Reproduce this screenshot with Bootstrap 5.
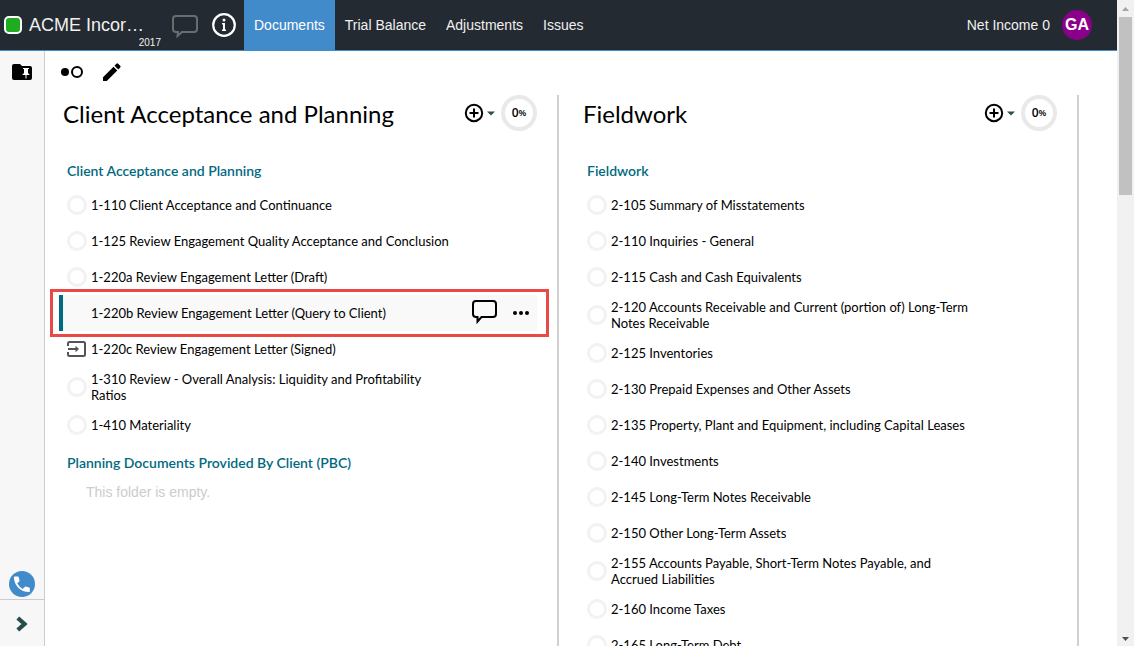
<!DOCTYPE html>
<html lang="en">
<head>
<meta charset="utf-8">
<meta name="viewport" content="width=device-width, initial-scale=1">
<title>ACME Incorporated - Documents</title>
<link href="https://cdn.jsdelivr.net/npm/bootstrap@5.3.0/dist/css/bootstrap.min.css" rel="stylesheet">
<style>
  body { font-family: "Liberation Sans", Arial, sans-serif; font-size: 14px; line-height: 20px; color: #000; background: #fff; }
  a { color: inherit; text-decoration: none; }
  button { border: 0; padding: 0; background: none; color: inherit; }
  svg { display: block; }
  .app-pane, .workspace { min-width: 0; min-height: 0; }
  .topbar { height: 51px; background: #242a31; border-bottom: 1px solid #428bca; color: #f0f0f0; }
  .status-chip { width: 18px; height: 18px; border: 2px solid #fff; border-radius: 5px; background: #20ac20; margin: 0 7px 0 4px; }
  .engagement { width: 133px; margin-right: 10px; }
  .engagement-name { font-size: 18px; line-height: 20px; }
  .engagement-year { right: 1px; top: 20px; font-size: 10px; line-height: 16px; }
  .info-button { margin: 0 8px 0 14px; }
  .tab-link { padding: 0 10px; color: #f0f0f0; }
  .tab-link.active { background: #428bca; color: #fff; }
  .avatar { width: 30px; height: 30px; background: #8b008b; color: #fff; font-size: 16px; font-weight: 700; margin: 0 25px 0 12px; }
  .sidebar { width: 45px; background: #f7f7f7; border-right: 1px solid #ccc; }
  .side-foot { height: 47px; border-top: 1px solid #ccc; padding-top: 2px; }
  .toolbar { height: 44px; padding: 0 0 2px 15px; gap: 18px; }
  .board { gap: 20px; padding: 0 38px 0 14px; }
  .phase { flex: 1 1 0; min-width: 0; padding-right: 20px; border-right: 2px solid #d0d0d0; font-family: Lato, sans-serif; }
  .phase-head { height: 36px; padding-left: 4px; margin-bottom: 24px; }
  .phase-title { font-size: 24px; line-height: 36px; font-weight: 400; padding-top: 2px; }
  .ring { width: 36px; height: 36px; border: 4px solid #e9e9e9; margin-left: 6px; font: 600 12px/16px "Open Sans", sans-serif; }
  .ring span { font-size: 9px; }
  .folder-title { margin: 0; padding-left: 8px; font-size: 14px; line-height: 32px; font-weight: 600; color: #006a80; }
  .doc { min-height: 36px; padding: 4px 86px 4px 8px; gap: 4px; font-size: 13px; line-height: 16px; }
  .doc-state { width: 20px; height: 20px; flex: none; }
  .state-open { border: 3px solid #f2f2f2; }
  .doc.current { background: #f9f9f9; box-shadow: inset 4px 0 #006a80; }
  .doc-actions { right: 7px; top: 0; bottom: 0; gap: 15px; }
  .callout-frame { inset: -6px -12px -6px -9px; border: 3px solid #ea4a46; }
  .empty-note { padding-left: 27px; margin: 0; line-height: 26px; color: #ccc; font-family: "Liberation Sans", Arial, sans-serif; }
  .scroll-track { width: 17px; background: #f1f1f1; padding: 7px 2px 5px; }
  .scroll-thumb { height: 28%; background: #c1c1c1; margin-top: 6px; }
</style>
</head>
<body class="vh-100 overflow-hidden d-flex">
<div class="app-pane d-flex flex-column flex-grow-1 h-100">
  <header class="topbar d-flex align-items-center flex-shrink-0">
    <span class="status-chip flex-shrink-0"></span>
    <div class="engagement position-relative flex-shrink-0">
      <a href="#" class="engagement-name d-block">ACME Incor…</a>
      <span class="engagement-year position-absolute">2017</span>
    </div>
    <button type="button" class="flex-shrink-0" aria-label="Comments">
      <svg width="26" height="26" viewBox="0 0 26 26" fill="none" stroke="#6a6d70" stroke-width="2"><path d="M4 4h18q3 0 3 3v10q0 3-3 3H10l-4.500 4L6 20H4q-3 0-3-3V7q0-3 3-3z"/></svg>
    </button>
    <button type="button" class="info-button flex-shrink-0" aria-label="Information">
      <svg width="24" height="24" viewBox="0 0 24 24"><circle cx="12" cy="12" r="10.800" fill="none" stroke="#fff" stroke-width="2.200"/><circle cx="12" cy="7" r="1.500" fill="#fff"/><path d="M10 10h3v6.500h1V18h-4v-1.500h1v-5h-1z" fill="#fff"/></svg>
    </button>
    <nav class="d-flex h-100">
      <a class="tab-link active d-flex align-items-center" href="#">Documents</a>
      <a class="tab-link d-flex align-items-center" href="#">Trial Balance</a>
      <a class="tab-link d-flex align-items-center" href="#">Adjustments</a>
      <a class="tab-link d-flex align-items-center" href="#">Issues</a>
    </nav>
    <span class="ms-auto">Net Income 0</span>
    <button type="button" class="avatar rounded-circle">GA</button>
  </header>

  <div class="workspace d-flex flex-grow-1">
    <aside class="sidebar d-flex flex-column align-items-center flex-shrink-0">
      <button type="button" class="mt-2 pt-1" aria-label="Pinned folders">
        <svg width="20" height="18" viewBox="0 0 20 18"><path d="M2 1h6l2 2h8q2 0 2 2v10q0 2-2 2H2q-2 0-2-2V3q0-2 2-2z" fill="#000"/><path d="M11 5h6v1h-1v4l1.500 1.500V12h-3v3.500h-1V12h-3v-.500L12 10V6h-1z" fill="#fff"/></svg>
      </button>
      <button type="button" class="mt-auto mb-0" aria-label="Call support">
        <svg width="26" height="28" viewBox="0 0 26 28"><circle cx="13" cy="13" r="13" fill="#428bca"/><path d="M5.500 5.500H9q.6 0 .8.800l.7 3.200q.1.500-.3.900L8.200 12.300q2 3.700 5.500 5.600l2-2q.4-.4.900-.3l3.400.8q.8.200.8.900V20.500q0 .6-.7.600C11.500 21 5 14.500 4.900 6.200q0-.7.600-.7z" fill="#fff"/></svg>
      </button>
      <button type="button" class="side-foot w-100 d-flex align-items-center justify-content-center" aria-label="Expand sidebar">
        <svg width="12" height="16" viewBox="0 0 12 16"><path d="M1.800 2 8.500 8l-6.700 6" fill="none" stroke="#244d4d" stroke-width="4.200"/></svg>
      </button>
    </aside>

    <main class="flex-grow-1 overflow-hidden">
      <div class="toolbar d-flex align-items-center">
        <button type="button" aria-label="Show status">
          <svg width="24" height="14" viewBox="0 0 24 14"><circle cx="5" cy="7" r="4" fill="#000"/><circle cx="17" cy="7" r="5" fill="none" stroke="#000" stroke-width="2"/></svg>
        </button>
        <button type="button" aria-label="Edit">
          <svg width="20" height="20" viewBox="0 0 20 20"><path d="M1 15.200V19h3.800L15.300 8.500l-3.800-3.800zM18.200 5.600q.9-.9 0-1.800l-2-2q-.9-.9-1.800 0l-1.900 1.900 3.800 3.800z"/></svg>
        </button>
      </div>

      <div class="board d-flex">
        <section class="phase">
          <div class="phase-head d-flex align-items-center">
            <h1 class="phase-title mb-0 me-auto">Client Acceptance and Planning</h1>
            <button type="button" class="d-flex align-items-center" aria-label="Add to Client Acceptance and Planning">
              <svg width="31" height="20" viewBox="0 0 31 20"><circle cx="10" cy="10" r="8.200" fill="none" stroke="#000" stroke-width="2"/><path d="M9 5.500h2V9h3.500v2H11v3.500H9V11H5.500V9H9z"/><path d="M23 8.500h8L27 12.500z" fill="#2f4f4f"/></svg>
            </button>
            <div class="ring rounded-circle d-flex align-items-center justify-content-center">0<span>%</span></div>
          </div>
          <h2 class="folder-title">Client Acceptance and Planning</h2>
          <ul class="list-unstyled mb-1">
            <li class="doc d-flex align-items-center"><button type="button" class="doc-state state-open rounded-circle" aria-label="Status"></button><a href="#">1-110 Client Acceptance and Continuance</a></li>
            <li class="doc d-flex align-items-center"><button type="button" class="doc-state state-open rounded-circle" aria-label="Status"></button><a href="#">1-125 Review Engagement Quality Acceptance and Conclusion</a></li>
            <li class="doc d-flex align-items-center"><button type="button" class="doc-state state-open rounded-circle" aria-label="Status"></button><a href="#">1-220a Review Engagement Letter (Draft)</a></li>
            <li class="doc current d-flex align-items-center position-relative">
              <span class="doc-state"></span><a href="#">1-220b Review Engagement Letter (Query to Client)</a>
              <div class="doc-actions position-absolute d-flex align-items-center">
                <button type="button" aria-label="Comment">
                  <svg width="26" height="26" viewBox="0 0 26 26" fill="none" stroke="#000" stroke-width="2"><path d="M5 1h17q3 0 3 3v10q0 3-3 3H10.500L6.500 21.500V17H5q-3 0-3-3V4q0-3 3-3z"/></svg>
                </button>
                <button type="button" aria-label="More actions">
                  <svg width="18" height="6" viewBox="0 0 18 6"><circle cx="3" cy="3" r="2"/><circle cx="9" cy="3" r="2"/><circle cx="15" cy="3" r="2"/></svg>
                </button>
              </div>
              <div class="callout-frame position-absolute pe-none"></div>
            </li>
            <li class="doc d-flex align-items-center">
              <button type="button" class="doc-state" aria-label="Signed document">
                <svg width="20" height="20" viewBox="0 0 20 20" fill="none" stroke="#555" stroke-width="2"><path d="M1 7V4.500Q1 3 2.500 3h14Q18 3 18 4.500v11q0 1.500-1.500 1.500h-14Q1 17 1 15.500V13M1 10h9"/><path d="M8.500 6.800v6.400l3.500-3.200z" fill="#555" stroke="none"/></svg>
              </button><a href="#">1-220c Review Engagement Letter (Signed)</a></li>
            <li class="doc d-flex align-items-center"><button type="button" class="doc-state state-open rounded-circle" aria-label="Status"></button><a href="#">1-310 Review - Overall Analysis: Liquidity and Profitability Ratios</a></li>
            <li class="doc d-flex align-items-center"><button type="button" class="doc-state state-open rounded-circle" aria-label="Status"></button><a href="#">1-410 Materiality</a></li>
          </ul>
          <h2 class="folder-title">Planning Documents Provided By Client (PBC)</h2>
          <p class="empty-note">This folder is empty.</p>
        </section>

        <section class="phase">
          <div class="phase-head d-flex align-items-center">
            <h1 class="phase-title mb-0 me-auto">Fieldwork</h1>
            <button type="button" class="d-flex align-items-center" aria-label="Add to Fieldwork">
              <svg width="31" height="20" viewBox="0 0 31 20"><circle cx="10" cy="10" r="8.200" fill="none" stroke="#000" stroke-width="2"/><path d="M9 5.500h2V9h3.500v2H11v3.500H9V11H5.500V9H9z"/><path d="M23 8.500h8L27 12.500z" fill="#2f4f4f"/></svg>
            </button>
            <div class="ring rounded-circle d-flex align-items-center justify-content-center">0<span>%</span></div>
          </div>
          <h2 class="folder-title">Fieldwork</h2>
          <ul class="list-unstyled mb-1">
            <li class="doc d-flex align-items-center"><button type="button" class="doc-state state-open rounded-circle" aria-label="Status"></button><a href="#">2-105 Summary of Misstatements</a></li>
            <li class="doc d-flex align-items-center"><button type="button" class="doc-state state-open rounded-circle" aria-label="Status"></button><a href="#">2-110 Inquiries - General</a></li>
            <li class="doc d-flex align-items-center"><button type="button" class="doc-state state-open rounded-circle" aria-label="Status"></button><a href="#">2-115 Cash and Cash Equivalents</a></li>
            <li class="doc d-flex align-items-center"><button type="button" class="doc-state state-open rounded-circle" aria-label="Status"></button><a href="#">2-120 Accounts Receivable and Current (portion of) Long-Term Notes Receivable</a></li>
            <li class="doc d-flex align-items-center"><button type="button" class="doc-state state-open rounded-circle" aria-label="Status"></button><a href="#">2-125 Inventories</a></li>
            <li class="doc d-flex align-items-center"><button type="button" class="doc-state state-open rounded-circle" aria-label="Status"></button><a href="#">2-130 Prepaid Expenses and Other Assets</a></li>
            <li class="doc d-flex align-items-center"><button type="button" class="doc-state state-open rounded-circle" aria-label="Status"></button><a href="#">2-135 Property, Plant and Equipment, including Capital Leases</a></li>
            <li class="doc d-flex align-items-center"><button type="button" class="doc-state state-open rounded-circle" aria-label="Status"></button><a href="#">2-140 Investments</a></li>
            <li class="doc d-flex align-items-center"><button type="button" class="doc-state state-open rounded-circle" aria-label="Status"></button><a href="#">2-145 Long-Term Notes Receivable</a></li>
            <li class="doc d-flex align-items-center"><button type="button" class="doc-state state-open rounded-circle" aria-label="Status"></button><a href="#">2-150 Other Long-Term Assets</a></li>
            <li class="doc d-flex align-items-center"><button type="button" class="doc-state state-open rounded-circle" aria-label="Status"></button><a href="#">2-155 Accounts Payable, Short-Term Notes Payable, and Accrued Liabilities</a></li>
            <li class="doc d-flex align-items-center"><button type="button" class="doc-state state-open rounded-circle" aria-label="Status"></button><a href="#">2-160 Income Taxes</a></li>
            <li class="doc d-flex align-items-center"><button type="button" class="doc-state state-open rounded-circle" aria-label="Status"></button><a href="#">2-165 Long-Term Debt</a></li>
          </ul>
        </section>
      </div>
    </main>
  </div>
</div>
<div class="scroll-track d-flex flex-column flex-shrink-0" aria-hidden="true">
  <svg class="mx-auto flex-shrink-0" width="7" height="4" viewBox="0 0 7 4"><path d="M0 4h7L3.500 0z" fill="#a3a3a3"/></svg>
  <div class="scroll-thumb"></div>
  <svg class="mx-auto mt-auto flex-shrink-0" width="7" height="4" viewBox="0 0 7 4"><path d="M0 0h7L3.500 4z" fill="#505050"/></svg>
</div>
<script src="https://cdn.jsdelivr.net/npm/bootstrap@5.3.0/dist/js/bootstrap.bundle.min.js"></script>
</body>
</html>
